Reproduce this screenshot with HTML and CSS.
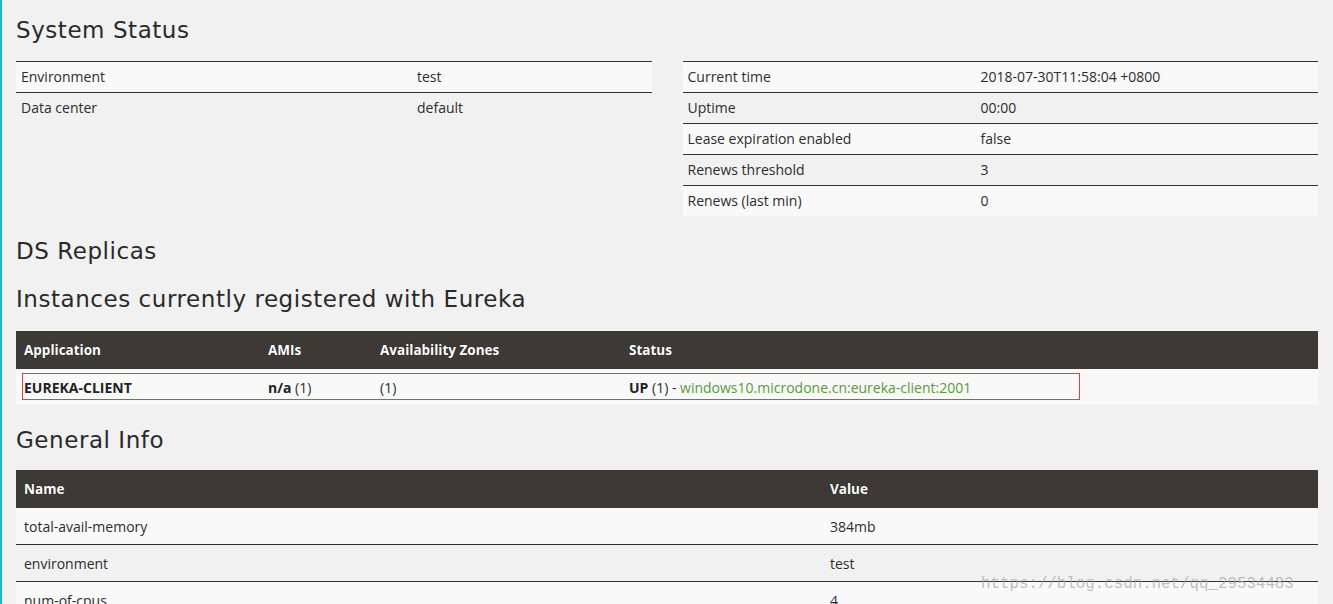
FILE: index.html
```html
<!DOCTYPE html>
<html>
<head>
<meta charset="utf-8">
<title>Eureka</title>
<link rel="stylesheet" href="styles.css">
</head>
<body>
<div class="page">
  <h2 class="heading heading-first">System Status</h2>
  <div class="status-row">
    <table class="kv kv-left">
      <tbody>
        <tr><td class="k">Environment</td><td>test</td></tr>
        <tr><td class="k">Data center</td><td>default</td></tr>
      </tbody>
    </table>
    <table class="kv kv-right">
      <tbody>
        <tr><td class="k">Current time</td><td>2018-07-30T11:58:04 +0800</td></tr>
        <tr><td class="k">Uptime</td><td>00:00</td></tr>
        <tr><td class="k">Lease expiration enabled</td><td>false</td></tr>
        <tr><td class="k">Renews threshold</td><td>3</td></tr>
        <tr><td class="k">Renews (last min)</td><td>0</td></tr>
      </tbody>
    </table>
  </div>

  <h2 class="heading heading-ds">DS Replicas</h2>
  <h2 class="heading heading-inst">Instances currently registered with Eureka</h2>
  <div class="inst-wrap">
    <table class="grid inst">
      <thead>
        <tr><th class="c-app">Application</th><th class="c-ami">AMIs</th><th class="c-az">Availability Zones</th><th>Status</th></tr>
      </thead>
      <tbody>
        <tr>
          <td><b>EUREKA-CLIENT</b></td>
          <td><b>n/a</b> (1)</td>
          <td>(1)</td>
          <td><b>UP</b> (1) - <a class="link">windows10.microdone.cn:eureka-client:2001</a></td>
        </tr>
      </tbody>
    </table>
    <div class="mark"></div>
  </div>

  <h2 class="heading heading-gen">General Info</h2>
  <table class="grid gen">
    <thead>
      <tr><th class="c-name">Name</th><th>Value</th></tr>
    </thead>
    <tbody>
      <tr><td>total-avail-memory</td><td>384mb</td></tr>
      <tr><td>environment</td><td>test</td></tr>
      <tr><td>num-of-cpus</td><td>4</td></tr>
      <tr><td>current-memory-usage</td><td>95mb (24%)</td></tr>
    </tbody>
  </table>
</div>
<div class="watermark">https://blog.csdn.net/qq_29534483</div>
</body>
</html>
```

FILE: styles.css
```css
html {
  overflow: hidden;
}
body {
  margin: 0;
  background: #f1f1f1;
  border-left: 2px solid #1fb8cb;
  min-height: 604px;
  position: relative;
  font-family: "Open Sans", "DejaVu Sans", sans-serif;
  font-size: 14px;
  color: #2d2d2d;
}
.page {
  padding: 0 15px 0 14px;
}
.heading {
  font-family: "DejaVu Sans", "Inter", sans-serif;
  font-weight: 500;
  font-size: 23px;
  letter-spacing: 0.55px;
  line-height: 26px;
  color: #2a2a2a;
  margin: 22px 0 18px;
}
.heading-first {
  margin-top: 17px;
}
.heading-inst {
  margin-bottom: 19px;
}
.heading-gen {
  margin-bottom: 17px;
}
.status-row {
  display: flex;
  gap: 31px;
  align-items: flex-start;
}
table {
  border-collapse: collapse;
  border-spacing: 0;
}
.kv {
  flex: 1 1 0;
}
.kv td {
  height: 30px;
  padding: 0 5px;
  border-top: 1px solid #333;
  vertical-align: middle;
  line-height: 18px;
}
.kv tr:nth-child(odd) td {
  background: #f9f9f9;
}
.kv-left .k {
  width: 386px;
}
.kv-right .k {
  width: 283px;
}
.inst-wrap {
  position: relative;
}
.grid {
  width: 100%;
}
.grid th {
  background: #3d3934;
  color: #fff;
  font-weight: 700;
  font-size: 13.5px;
  text-align: left;
  height: 38px;
  padding: 0 8px;
  text-shadow: 0 0 1px rgba(0,0,0,0.6);
  vertical-align: middle;
}
.grid td {
  padding: 0 8px;
  vertical-align: middle;
}
.inst td {
  height: 36px;
  background: #f9f9f9;
}
.c-app { width: 228px; }
.c-ami { width: 96px; }
.c-az { width: 233px; }
.c-name { width: 790px; }
.gen td {
  height: 36px;
}
.gen tbody tr + tr td {
  border-top: 1px solid #333;
}
.gen tbody tr:nth-child(odd) td {
  background: #f9f9f9;
}
b {
  font-weight: 700;
  color: #222;
}
.link {
  color: #5a9a3a;
  text-decoration: none;
}
.mark {
  position: absolute;
  left: 6px;
  top: 42px;
  width: 1056px;
  height: 25px;
  border: 1px solid #ec3c3c;
}
.watermark {
  position: absolute;
  left: 979px;
  top: 575px;
  font-family: "Liberation Mono", monospace;
  font-size: 15.8px;
  color: rgba(165, 165, 165, 0.7);
  white-space: nowrap;
}
```
